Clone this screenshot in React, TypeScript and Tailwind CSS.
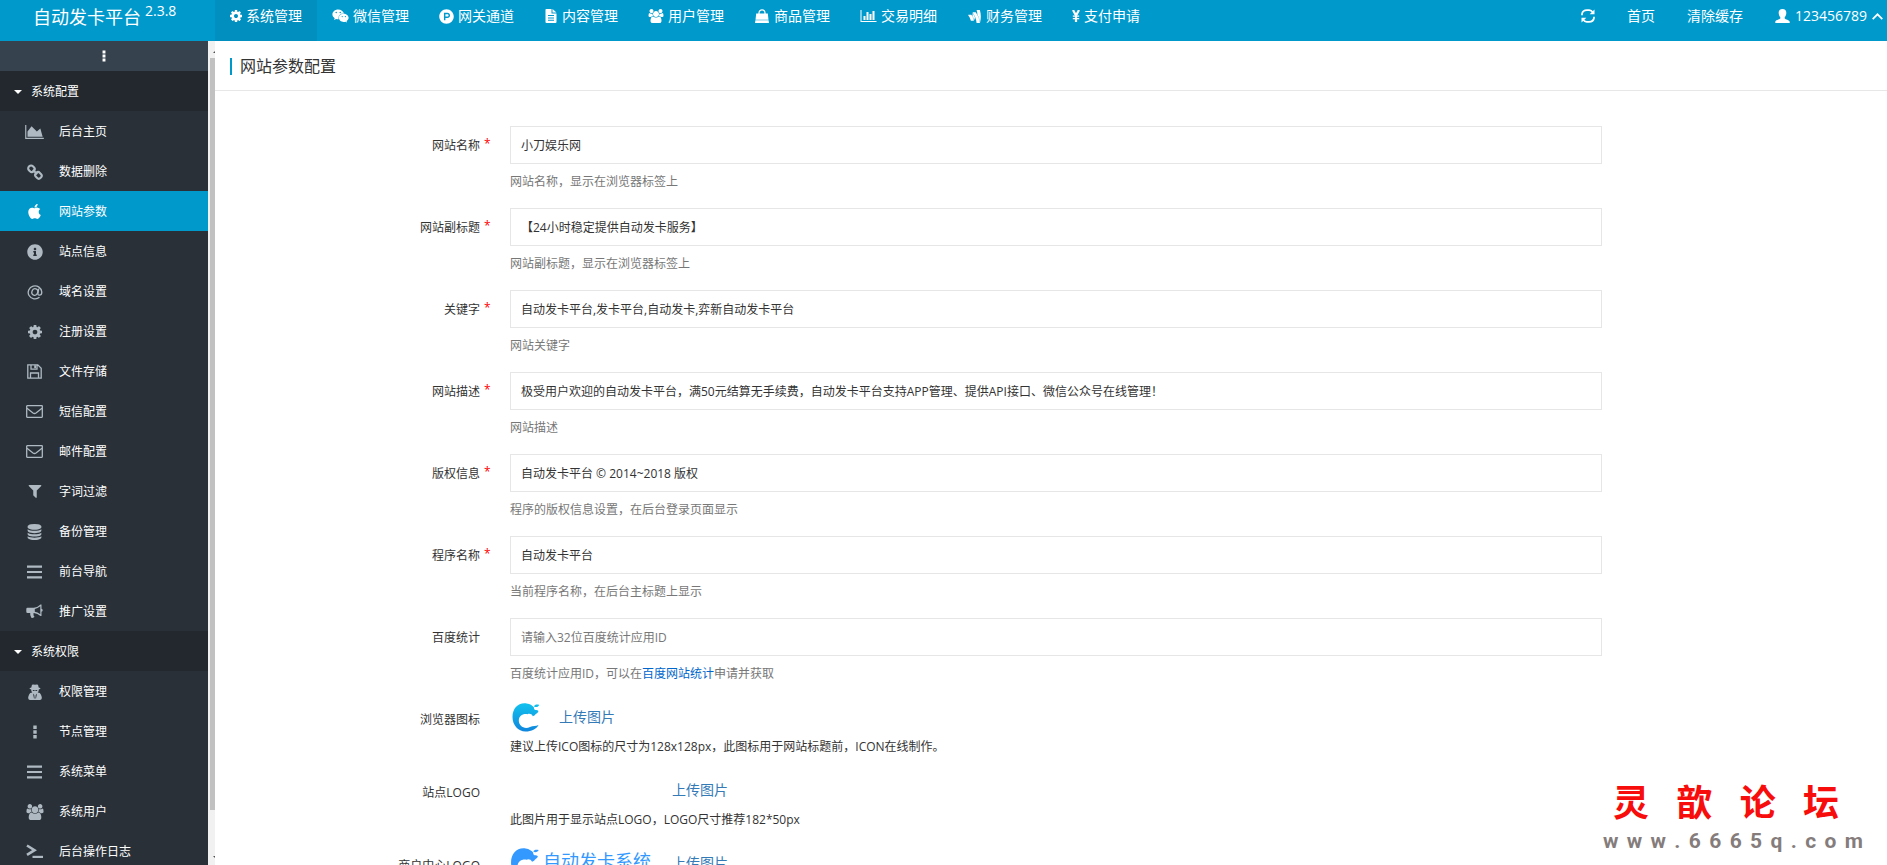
import React from "react";
import { FaApple, FaInfoCircle, FaWeixin, FaGoogleWallet, FaProductHunt } from "react-icons/fa";

type IconProps = { className?: string };

function Shape({ box, d, className }: { box: string; d: string; className?: string }) {
  return (
    <svg viewBox={box} className={className} fill="currentColor" fillRule="evenodd" aria-hidden="true">
      <path d={d} />
    </svg>
  );
}

const CogIcon = ({ className }: IconProps) => (
  <Shape
    className={className}
    box="128 128 1536 1536"
    d="M1152 896q0-106-75-181t-181-75-181 75-75 181 75 181 181 75 181-75 75-181zm512-109v222q0 12-8 23t-20 13l-185 28q-19 54-39 91 35 50 107 138 10 12 10 25t-9 23q-27 37-99 108t-94 71q-12 0-26-9l-138-108q-44 23-91 38-16 136-29 186-7 28-36 28h-222q-14 0-24.5-8.5t-11.5-21.5l-28-184q-49-16-90-37l-141 107q-10 9-25 9-14 0-25-11-126-114-165-168-7-10-7-23 0-12 8-23 15-21 51-66.5t54-70.5q-27-50-41-99l-183-27q-13-2-21-12.5t-8-23.5v-222q0-12 8-23t19-13l186-28q14-46 39-92-40-57-107-138-10-12-10-24 0-10 9-23 26-36 98.5-107.5t94.5-71.5q13 0 26 10l138 107q44-23 91-38 16-136 29-186 7-28 36-28h222q14 0 24.5 8.5t11.5 21.5l28 184q49 16 90 37l142-107q9-9 24-9 13 0 25 10 129 119 165 170 7 8 7 22 0 12-8 23-15 21-51 66.5t-54 70.5q26 50 41 98l183 28q13 2 21 12.5t8 23.5z"
  />
);
const UsersIcon = ({ className }: IconProps) => (
  <Shape
    className={className}
    box="0 0 1920 1792"
    d="M593 896q-162 5-265 128h-134q-82 0-138-40.5t-56-118.5q0-353 124-353 6 0 43.5 21t97.5 42.5 119 21.5q67 0 133-23-5 37-5 66 0 139 81 256zm1071 637q0 120-73 189.5t-194 69.5h-874q-121 0-194-69.5t-73-189.5q0-53 3.5-103.5t14-109 26.5-108.5 43-97.5 62-81 85.5-53.5 111.5-20q10 0 43 21.5t73 48 107 48 135 21.5 135-21.5 107-48 73-48 43-21.5q61 0 111.5 20t85.5 53.5 62 81 43 97.5 26.5 108.5 14 109 3.5 103.5zm-1024-1277q0 106-75 181t-181 75-181-75-75-181 75-181 181-75 181 75 75 181zm704 384q0 159-112.5 271.5t-271.5 112.5-271.5-112.5-112.5-271.5 112.5-271.5 271.5-112.5 271.5 112.5 112.5 271.5zm576 225q0 78-56 118.5t-138 40.5h-134q-103-123-265-128 81-117 81-256 0-29-5-66 66 23 133 23 59 0 119-21.5t97.5-42.5 43.5-21q124 0 124 353zm-128-609q0 106-75 181t-181 75-181-75-75-181 75-181 181-75 181 75 75 181z"
  />
);
const AreaChartIcon = ({ className }: IconProps) => (
  <Shape className={className} box="0 128 2048 1536" d="M2048 1536v128h-2048v-1536h128v1408h1920zm-384-1024l256 896h-1664v-576l448-576 576 576z" />
);
const BarChartIcon = ({ className }: IconProps) => (
  <Shape
    className={className}
    box="0 128 2048 1536"
    d="M640 896v512h-256v-512h256zm384-512v1024h-256v-1024h256zm1024 1152v128h-2048v-1536h128v1408h1920zm-640-896v768h-256v-768h256zm384-384v1152h-256v-1152h256z"
  />
);
const FilterIcon = ({ className }: IconProps) => (
  <Shape
    className={className}
    box="128 256 1536 1408"
    d="M1595 295q17 41-14 70l-493 493v742q0 42-39 59-13 5-25 5-27 0-45-19l-256-256q-19-19-19-45v-486l-493-493q-31-29-14-70 17-39 59-39h1280q42 0 59 39z"
  />
);
const DatabaseIcon = ({ className }: IconProps) => (
  <Shape
    className={className}
    box="0 0 1792 1792"
    d="M896 768q237 0 443-43t325-127v170q0 69-103 128t-280 93.5-385 34.5-385-34.5-280-93.5-103-128v-170q119 84 325 127t443 43zm0 768q237 0 443-43t325-127v170q0 69-103 128t-280 93.5-385 34.5-385-34.5-280-93.5-103-128v-170q119 84 325 127t443 43zm0-384q237 0 443-43t325-127v170q0 69-103 128t-280 93.5-385 34.5-385-34.5-280-93.5-103-128v-170q119 84 325 127t443 43zm0-1152q208 0 385 34.5t280 93.5 103 128v128q0 69-103 128t-280 93.5-385 34.5-385-34.5-280-93.5-103-128v-128q0-69 103-128t280-93.5 385-34.5z"
  />
);
const TerminalIcon = ({ className }: IconProps) => (
  <svg viewBox="0 0 17 15" className={className} fill="none" stroke="currentColor" aria-hidden="true">
    <path d="M1 1.500l7.500 4.700L1 10.900" strokeWidth="2.600" />
    <path d="M6.500 12.900H17" strokeWidth="2.200" />
  </svg>
);
const SpyIcon = ({ className }: IconProps) => (
  <Shape
    className={className}
    box="0 0 14 16"
    d="M4 .8q1.500-.8 3 0 1.500-.8 3 0l.7 2.700q1.800.5 1.800.9-.2.700-1.700 1 .1 2-1.100 3.200 2.600.1 3.300 2.100 1 2.300.8 3.600Q13.600 16 12 16H2Q.4 16 .2 14.300 0 13 1 10.700 1.700 8.700 4.300 8.600 3.100 7.400 3.200 5.400q-1.500-.3-1.700-1 0-.4 1.800-.9zM4.600 6q.3 1.300 1.800.7L7 6.100l.6.6Q9.100 7.300 9.400 6zM5 9.600l1 5h.6l-.3-3.500zM9 9.600l-1.300 1.500-.3 3.500H8z"
  />
);
const BarsIcon = ({ className }: IconProps) => (
  <Shape className={className} box="0 0 15 14" d="M0 .5h15v2.200h-15zM0 5.900h15v2.200h-15zM0 11.300h15v2.200h-15z" />
);
const DotsIcon = ({ className }: IconProps) => (
  <Shape className={className} box="0 0 14 14" d="M5.300 .6h3.400v3.400h-3.400zM5.300 5.300h3.400v3.400h-3.400zM5.300 10h3.400v3.400h-3.400z" />
);
const FileIcon = ({ className }: IconProps) => (
  <Shape
    className={className}
    box="0 0 13 14"
    d="M1.500 0h5.500v4.500h5v8.500q0 1-1 1h-9q-1 0-1-1v-12q0-1 .5-1zM8 0l4 3.600h-4zM3.500 6v1h6v-1zM3.500 8.400v1h6v-1zM3.500 10.800v1h6v-1z"
  />
);
const BagIcon = ({ className }: IconProps) => (
  <svg viewBox="0 0 15 14" className={className} aria-hidden="true">
    <path d="M4.500 7V4a3 3.200 0 0 1 6 0v3" fill="none" stroke="currentColor" strokeWidth="1.200" />
    <path d="M1.700 4.600h11.600l.7 6.100H1zM.9 11.200h13.200l.4 2.800H.5z" fill="currentColor" />
  </svg>
);
const LinkIcon = ({ className }: IconProps) => (
  <svg viewBox="0 0 16 16" className={className} fill="none" stroke="currentColor" strokeWidth="2.100" aria-hidden="true">
    <rect x="1.200" y="2" width="6.600" height="5.600" rx="2.600" transform="rotate(45 4.500 4.700)" />
    <rect x="8.200" y="8.600" width="6.600" height="5.600" rx="2.600" transform="rotate(45 11.500 11.300)" />
    <path d="M5.800 5.800l4.400 4.400" />
  </svg>
);
const SaveIcon = ({ className }: IconProps) => (
  <svg viewBox="0 0 15 15" className={className} fill="none" stroke="currentColor" strokeWidth="1.300" aria-hidden="true">
    <path d="M.8.8h10l3.400 3.400v10H.8zM3.500 14V9h8v5M4 1v4.200h6V1" />
    <path d="M7.200 1.300h1.800v3h-1.800z" fill="currentColor" stroke="none" />
  </svg>
);
const MailIcon = ({ className }: IconProps) => (
  <svg viewBox="0 0 17 13" className={className} fill="none" stroke="currentColor" strokeWidth="1.300" aria-hidden="true">
    <rect x=".7" y=".7" width="15.600" height="11.600" rx=".5" />
    <path d="M1 3.300l6 4.700q1.500 1 3 0l6-4.700" />
  </svg>
);
const HornIcon = ({ className }: IconProps) => (
  <svg viewBox="0 0 17 15" className={className} fill="currentColor" fillRule="evenodd" aria-hidden="true">
    <path d="M1.500 3.800h6.300Q11.500 3.600 14.500.5h1v4.300q1.200.4 1.200 1.500t-1.200 1.500v4.200h-1q-3-2.900-6.600-3.100-1 .7-.3 1.700-.5 1 .9 2.200-.8 1.500-3.200 1-1.500-3-1.100-4.900H1.500Q.3 8.900.3 7.700V5q0-1.200 1.200-1.200zM14.300 2.300Q11.500 4.500 8.800 4.900v2.900q2.700.4 5.500 2.500z" />
  </svg>
);
const AtIcon = ({ className }: IconProps) => (
  <svg viewBox="0 0 16 16" className={className} fill="none" stroke="currentColor" strokeWidth="1.300" aria-hidden="true">
    <path d="M12.500 13.300A6.800 6.500 0 1 1 14.800 8q0 3.200-2.400 3.200-1.900 0-1.400-2L11.700 4.600" />
    <ellipse cx="7.800" cy="8" rx="2.900" ry="3.300" transform="rotate(20 7.800 8)" />
  </svg>
);
const RefreshIcon = ({ className }: IconProps) => (
  <svg viewBox="0 0 14 14" className={className} fill="none" stroke="currentColor" strokeWidth="1.700" aria-hidden="true">
    <path d="M1 6.200V5Q1.600 1.200 6 1.200h2.200q2.300.1 3.600 2.200M13 7.800V9q-.6 3.800-5 3.800H5.800q-2.300-.1-3.600-2.200" />
    <path d="M13.500.5v4.800H8.700zM.5 13.500V8.700h4.800z" fill="currentColor" stroke="none" />
  </svg>
);
const PersonIcon = ({ className }: IconProps) => (
  <Shape
    className={className}
    box="0 0 15 14"
    d="M7.500 0c2.700 0 4 1.700 3.800 4.300-.1 1.700-.8 3-1.600 3.900v1.300c.5 1 5 1.600 5 3.200V14H.3v-1.300c0-1.600 4.500-2.200 5-3.200V8.200C4.500 7.300 3.800 6 3.700 4.300 3.500 1.700 4.800 0 7.500 0z"
  />
);
const CaretUp = ({ className }: IconProps) => (
  <svg viewBox="0 0 11 7" className={className} fill="none" stroke="currentColor" strokeWidth="1.700" aria-hidden="true">
    <path d="M.7 6.200L5.500 1.300l4.800 4.900" />
  </svg>
);
const CaretDown = ({ className }: IconProps) => <Shape className={className} box="0 0 8 4" d="M0 0h8L4 4z" />;
const YenIcon = ({ className }: IconProps) => (
  <svg viewBox="0 0 8 12" className={className} fill="none" stroke="currentColor" strokeWidth="2.200" aria-hidden="true">
    <path d="M1 0L4 5.500 7 0M4 5V12" />
    <path d="M.8 6.200h6.400M.8 8.700h6.400" strokeWidth="1.300" />
  </svg>
);
function Swirl({ className, top, bottom }: { className?: string; top: string; bottom: string }) {
  const id = "swirl" + top.slice(1);
  return (
    <svg viewBox="0 0 28 29" className={className} aria-hidden="true">
      <defs>
        <linearGradient id={id} x1="0" y1="0" x2="0" y2="1">
          <stop offset="0" stopColor={top} />
          <stop offset="1" stopColor={bottom} />
        </linearGradient>
      </defs>
      <path
        fill={`url(#${id})`}
        d="M22 4.500C19 1 15 .3 12.500.3 5.500.3.500 6 .5 14c0 8 5.500 14.500 13 14.500 6 0 11-2.500 13-6.500-2.500 1.500-5.500.3-8.500 2-6 2.800-11-1.500-11.200-6.300C6.800 13 11 10.300 15.500 11.300c1.500-1 4.300-.5 5.300 2l2-1c.4-1.600 3.200-2 3.700-4.300-1.500-1.300-3.300-.6-4-1.500-.6-.8-.6-1.300-.5-2zM22 3.400c2 1.300 4.400.6 5.200-1.400-2-.7-4.500-.6-5.200 1.400z"
      />
    </svg>
  );
}

type Entry = { label: string; icon: React.ComponentType<IconProps>; size: string };

const NAV: Entry[] = [
  { label: "系统管理", icon: CogIcon, size: "h-3 w-3" },
  { label: "微信管理", icon: FaWeixin, size: "h-4 w-[17px]" },
  { label: "网关通道", icon: FaProductHunt, size: "h-[15px] w-[15px]" },
  { label: "内容管理", icon: FileIcon, size: "h-[14px] w-[14px]" },
  { label: "用户管理", icon: UsersIcon, size: "h-[14px] w-4" },
  { label: "商品管理", icon: BagIcon, size: "h-[14px] w-4" },
  { label: "交易明细", icon: BarChartIcon, size: "h-3 w-[17px]" },
  { label: "财务管理", icon: FaGoogleWallet, size: "h-[15px] w-[15px]" },
  { label: "支付申请", icon: YenIcon, size: "h-3 w-2" },
];

const GROUPS: { title: string; items: Entry[] }[] = [
  {
    title: "系统配置",
    items: [
      { label: "后台主页", icon: AreaChartIcon, size: "h-[14px] w-[19px]" },
      { label: "数据删除", icon: LinkIcon, size: "h-4 w-4" },
      { label: "网站参数", icon: FaApple, size: "h-[17px] w-[17px]" },
      { label: "站点信息", icon: FaInfoCircle, size: "h-4 w-4" },
      { label: "域名设置", icon: AtIcon, size: "h-4 w-4" },
      { label: "注册设置", icon: CogIcon, size: "h-[14px] w-[14px]" },
      { label: "文件存储", icon: SaveIcon, size: "h-[15px] w-[15px]" },
      { label: "短信配置", icon: MailIcon, size: "h-[13px] w-[17px]" },
      { label: "邮件配置", icon: MailIcon, size: "h-[13px] w-[17px]" },
      { label: "字词过滤", icon: FilterIcon, size: "h-[13px] w-[14px]" },
      { label: "备份管理", icon: DatabaseIcon, size: "h-4 w-[17px]" },
      { label: "前台导航", icon: BarsIcon, size: "h-[14px] w-[15px]" },
      { label: "推广设置", icon: HornIcon, size: "h-[15px] w-[17px]" },
    ],
  },
  {
    title: "系统权限",
    items: [
      { label: "权限管理", icon: SpyIcon, size: "h-4 w-[14px]" },
      { label: "节点管理", icon: DotsIcon, size: "h-[14px] w-[14px]" },
      { label: "系统菜单", icon: BarsIcon, size: "h-[14px] w-[15px]" },
      { label: "系统用户", icon: UsersIcon, size: "h-4 w-[18px]" },
      { label: "后台操作日志", icon: TerminalIcon, size: "h-[15px] w-[17px]" },
    ],
  },
];

type Field = { id: string; label: string; required?: boolean; value?: string; placeholder?: string; help: React.ReactNode };

const FIELDS: Field[] = [
  { id: "site-name", label: "网站名称", required: true, value: "小刀娱乐网", help: "网站名称，显示在浏览器标签上" },
  { id: "site-subtitle", label: "网站副标题", required: true, value: "【24小时稳定提供自动发卡服务】", help: "网站副标题，显示在浏览器标签上" },
  { id: "keywords", label: "关键字", required: true, value: "自动发卡平台,发卡平台,自动发卡,弈新自动发卡平台", help: "网站关键字" },
  {
    id: "description",
    label: "网站描述",
    required: true,
    value: "极受用户欢迎的自动发卡平台，满50元结算无手续费，自动发卡平台支持APP管理、提供API接口、微信公众号在线管理！",
    help: "网站描述",
  },
  { id: "copyright", label: "版权信息", required: true, value: "自动发卡平台 © 2014~2018 版权", help: "程序的版权信息设置，在后台登录页面显示" },
  { id: "app-name", label: "程序名称", required: true, value: "自动发卡平台", help: "当前程序名称，在后台主标题上显示" },
  {
    id: "baidu",
    label: "百度统计",
    placeholder: "请输入32位百度统计应用ID",
    help: (
      <>
        百度统计应用ID，可以在
        <a href="#baidu" className="text-[#0066cc]">百度网站统计</a>
        申请并获取
      </>
    ),
  },
];

function Row({ label, htmlFor, required, children }: { label: string; htmlFor?: string; required?: boolean; children: React.ReactNode }) {
  const text = (
    <>
      {label}
      <span className="w-[9px] pb-1 pl-1 text-xs">{required ? "*" : ""}</span>
    </>
  );
  const style = "flex h-10 w-[274px] shrink-0 items-center justify-end text-[#333] [&>span]:text-[#ff0000]";
  return (
    <div className="flex gap-[21px]">
      {htmlFor ? <label htmlFor={htmlFor} className={style}>{text}</label> : <div className={style}>{text}</div>}
      <div className="min-w-0 flex-1">{children}</div>
    </div>
  );
}

export default function App() {
  return (
    <div className="flex h-screen flex-col overflow-hidden bg-white font-['Open_Sans','Noto_Sans_CJK_SC',sans-serif] text-xs text-[#333]">
      <header className="flex h-[41px] shrink-0 items-start bg-[#0099cc] text-sm text-white">
        <a href="#home" className="flex w-[215px] shrink-0 pl-[33px] text-lg leading-[34px]">
          自动发卡平台
          <span className="pl-1 text-sm leading-[22px]">2.3.8</span>
        </a>
        <nav className="flex h-full">
          {NAV.map(({ label, icon: Icon, size }, i) => (
            <a
              key={label}
              href="#nav"
              className={"flex h-full items-start px-[15px] leading-8 whitespace-nowrap " + (i === 0 ? "bg-[#008fbf]" : "")}
            >
              <span className="flex h-8 items-center gap-1">
                <Icon className={size} />
                {label}
              </span>
            </a>
          ))}
        </nav>
        <div className="ml-auto flex items-center gap-8 pr-1 leading-8">
          <button type="button" aria-label="刷新" className="flex h-8 items-center">
            <RefreshIcon className="h-[14px] w-[14px]" />
          </button>
          <a href="#index">首页</a>
          <a href="#cache">清除缓存</a>
          <button type="button" className="flex items-center gap-[5px]">
            <PersonIcon className="h-[14px] w-[15px]" />
            123456789
            <CaretUp className="h-[7px] w-[11px]" />
          </button>
        </div>
      </header>

      <div className="flex min-h-0 flex-1">
        <aside className="w-[208px] shrink-0 overflow-hidden bg-[#293038] text-white">
          <button type="button" aria-label="折叠菜单" className="flex h-[30px] w-full items-center justify-center bg-[#37424f]">
            <DotsIcon className="h-3 w-3" />
          </button>
          {GROUPS.map((group) => (
            <section key={group.title}>
              <h2 className="flex h-10 items-center gap-[9px] bg-[#22282e] pt-px pl-[14px]">
                <CaretDown className="h-1 w-2" />
                {group.title}
              </h2>
              <ul>
                {group.items.map(({ label, icon: Icon, size }) => {
                  const active = label === "网站参数";
                  return (
                    <li key={label}>
                      <a href="#menu" className={"flex h-10 items-center gap-[13px] pt-px pl-[23px] " + (active ? "bg-[#0099cc]" : "")}>
                        <span className={"flex w-[23px] justify-center " + (active ? "text-white" : "text-[#aeb9c2]")}>
                          <Icon className={size} />
                        </span>
                        {label}
                      </a>
                    </li>
                  );
                })}
              </ul>
            </section>
          ))}
        </aside>
        <div className="flex w-[7px] shrink-0 flex-col bg-[#f1f1f1] pl-0.5 text-[#505050]">
          <div className="flex h-[17px] items-center justify-end pt-1">
            <Shape className="h-0.5 w-0.5" box="0 0 2 2" d="M0 2L2 0v2z" />
          </div>
          <div className="flex-1 bg-[#c1c1c1]" />
          <div className="flex h-[55px] items-end justify-end pb-[7px]">
            <Shape className="h-0.5 w-0.5" box="0 0 2 2" d="M0 0h2v2z" />
          </div>
        </div>

        <main className="min-w-0 flex-1 overflow-hidden">
          <div className="flex h-[50px] items-center border-b border-[#e7e7e7] pt-0.5 pl-[15px]">
            <h1 className="border-l-2 border-[#0099cc] pl-2 text-base leading-[17px]">网站参数配置</h1>
          </div>
          <form className="pt-[35px] pr-[285px]">
            {FIELDS.map((f) => (
              <Row key={f.id} label={f.label} htmlFor={f.id} required={f.required}>
                <input
                  id={f.id}
                  type="text"
                  defaultValue={f.value}
                  placeholder={f.placeholder}
                  className="block h-[38px] w-full border border-[#e6e6e6] px-[10px] text-[#333] outline-none placeholder:text-[#777]"
                />
                <p className="h-11 leading-9 text-[#777]">{f.help}</p>
              </Row>
            ))}
            <Row label="浏览器图标">
              <div className="flex h-[34px] items-center gap-[19px] pl-0.5">
                <Swirl className="h-[29px] w-[28px]" top="#12c2ee" bottom="#0f86dd" />
                <a href="#icon" className="text-sm text-[#337ab7]">上传图片</a>
              </div>
              <p className="h-[39px] leading-[26px]">建议上传ICO图标的尺寸为128x128px，此图标用于网站标题前，ICON在线制作。</p>
            </Row>
            <Row label="站点LOGO">
              <div className="flex h-[34px] items-center pl-[162px]">
                <a href="#logo" className="text-sm text-[#337ab7]">上传图片</a>
              </div>
              <p className="h-[39px] leading-[26px]">此图片用于显示站点LOGO，LOGO尺寸推荐182*50px</p>
            </Row>
            <Row label="商户中心LOGO">
              <div className="flex h-[34px] items-center">
                <div className="flex w-[162px] items-center gap-[3px] text-lg text-[#3399ff]">
                  <Swirl className="h-[30px] w-[30px]" top="#3399ff" bottom="#3399fe" />
                  <span className="pb-1 leading-6">自动发卡系统</span>
                </div>
                <a href="#merchant" className="text-sm text-[#337ab7]">上传图片</a>
              </div>
            </Row>
          </form>
        </main>
      </div>

      <div className="pointer-events-none absolute right-6 bottom-3 w-[260px]">
        <div className="flex justify-between pr-6 pb-1 pl-2.5 font-['Noto_Sans_CJK_SC',sans-serif] text-[36px] leading-[50px] font-bold text-[#f80d0d]">
          {["灵", "歆", "论", "坛"].map((c) => (
            <span key={c}>{c}</span>
          ))}
        </div>
        <div className="flex justify-between font-['Roboto','Liberation_Sans',sans-serif] text-[21px] leading-6 font-bold text-[#857c7c]">
          {"www.6665q.com".split("").map((c, i) => (
            <span key={i}>{c}</span>
          ))}
        </div>
      </div>
    </div>
  );
}
